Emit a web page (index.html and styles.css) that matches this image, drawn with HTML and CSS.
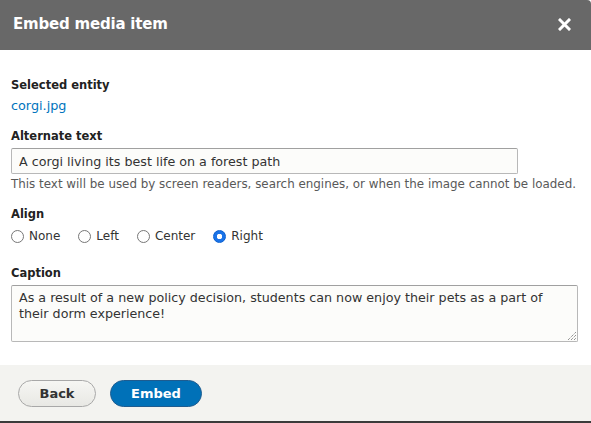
FILE: index.html
```html
<!DOCTYPE html>
<html>
<head>
<meta charset="utf-8">
<link rel="stylesheet" href="styles.css">
</head>
<body>
<div class="dialog">
  <header class="titlebar">
    <h1 class="title">Embed media item</h1>
    <button class="close" aria-label="Close">
      <svg width="13" height="13" viewBox="0 0 13 13"><path d="M2 2 L11 11 M11 2 L2 11" stroke="#fff" stroke-width="3" stroke-linecap="square"/></svg>
    </button>
  </header>
  <main class="content">
    <div class="field">
      <div class="label">Selected entity</div>
      <a class="link" href="#">corgi.jpg</a>
    </div>
    <div class="field">
      <label class="label">Alternate text</label>
      <input class="text-input" type="text" value="A corgi living its best life on a forest path">
      <div class="desc">This text will be used by screen readers, search engines, or when the image cannot be loaded.</div>
    </div>
    <div class="field field-radios">
      <div class="label">Align</div>
      <div class="radios">
        <label class="radio"><span class="circle"></span>None</label>
        <label class="radio"><span class="circle"></span>Left</label>
        <label class="radio"><span class="circle"></span>Center</label>
        <label class="radio"><span class="circle checked"></span>Right</label>
      </div>
    </div>
    <div class="field">
      <label class="label">Caption</label>
      <div class="textarea">As a result of a new policy decision, students can now enjoy their pets as a part of their dorm experience!
        <svg class="grip" width="9" height="9" viewBox="0 0 9 9"><path d="M1 9 L9 1 M4 9 L9 4 M7 9 L9 7" stroke="#666" stroke-width="1" stroke-dasharray="1 1"/></svg>
      </div>
    </div>
  </main>
  <footer class="buttons">
    <button class="btn back">Back</button>
    <button class="btn primary">Embed</button>
  </footer>
</div>
</body>
</html>
```
FILE: styles.css
```css
* { box-sizing: border-box; }
html, body { margin: 0; padding: 0; background: #fff; }
body {
  font-family: "DejaVu Sans", "Noto Sans", sans-serif;
  color: #222;
  width: 591px;
  height: 423px;
  overflow: hidden;
}
.dialog {
  display: flex;
  flex-direction: column;
  height: 423px;
  border-bottom: 2px solid #3b3b3b;
}
.titlebar {
  flex-shrink: 0;
  height: 50px;
  background: #686868;
  display: flex;
  align-items: center;
  justify-content: space-between;
  padding: 0 20px 2px 13px;
  border-top-right-radius: 4px;
}
.title {
  margin: 0;
  font-size: 15px;
  font-weight: bold;
  color: #fff;
  letter-spacing: -0.2px;
}
.close {
  background: none;
  border: 0;
  padding: 0;
  width: 13px;
  height: 13px;
  display: flex;
}
.content {
  flex: 1;
  min-height: 0;
  padding: 26px 13px 0 11px;
}
.field { margin-bottom: 12px; }
.field-radios { margin-bottom: 18px; }
.label {
  display: block;
  font-size: 11.5px;
  font-weight: bold;
  color: #222;
  line-height: 18px;
  margin-bottom: 3px;
}
.link {
  font-size: 12.8px;
  color: #0074bd;
  text-decoration: none;
  line-height: 18px;
  display: block;
}
.text-input {
  display: block;
  width: 507px;
  height: 26px;
  border: 1px solid #b8b8b8;
  border-top-color: #a0a0a0;
  border-radius: 2px;
  background: #fcfcfa;
  font-family: inherit;
  font-size: 12.7px;
  color: #333;
  padding: 0 7px;
  margin: 0;
}
.desc {
  font-size: 11.9px;
  color: #595959;
  margin-top: 1px;
  line-height: 18px;
  margin-bottom: 1px;
  white-space: nowrap;
}
.radios {
  display: flex;
  font-size: 12px;
  color: #333;
  margin-top: 1px;
}
.radio {
  display: flex;
  align-items: center;
  margin-right: 18px;
  line-height: 20px;
}
.circle {
  width: 13px;
  height: 13px;
  border: 1px solid #777;
  border-radius: 50%;
  margin-right: 5px;
  background: #fff;
}
.circle.checked {
  border: 1px solid #0a5fcf;
  background: radial-gradient(circle, #fff 0 2.5px, #1a73e8 3px);
}
.textarea {
  position: relative;
  width: 567px;
  height: 57px;
  border: 1px solid #b8b8b8;
  border-top-color: #a0a0a0;
  border-radius: 2px;
  background: #fcfcfa;
  font-size: 12.7px;
  color: #333;
  padding: 4px 7px;
  line-height: 16px;
}
.grip { position: absolute; right: 1px; bottom: 1px; }
.buttons {
  flex-shrink: 0;
  height: 56px;
  background: #f3f3f0;
  display: flex;
  align-items: center;
  gap: 14px;
  padding: 0 0 0 18px;
}
.btn {
  height: 27px;
  border-radius: 14px;
  font-family: inherit;
  font-size: 13px;
  font-weight: bold;
  padding: 0;
  margin: 0;
}
.back {
  width: 78px;
  background: linear-gradient(#f6f6f3, #e8e8e4);
  border: 1px solid #a8a8a8;
  color: #333;
}
.primary {
  width: 92px;
  background: #0071b8;
  border: 1px solid #1e5c90;
  color: #fff;
}
```
